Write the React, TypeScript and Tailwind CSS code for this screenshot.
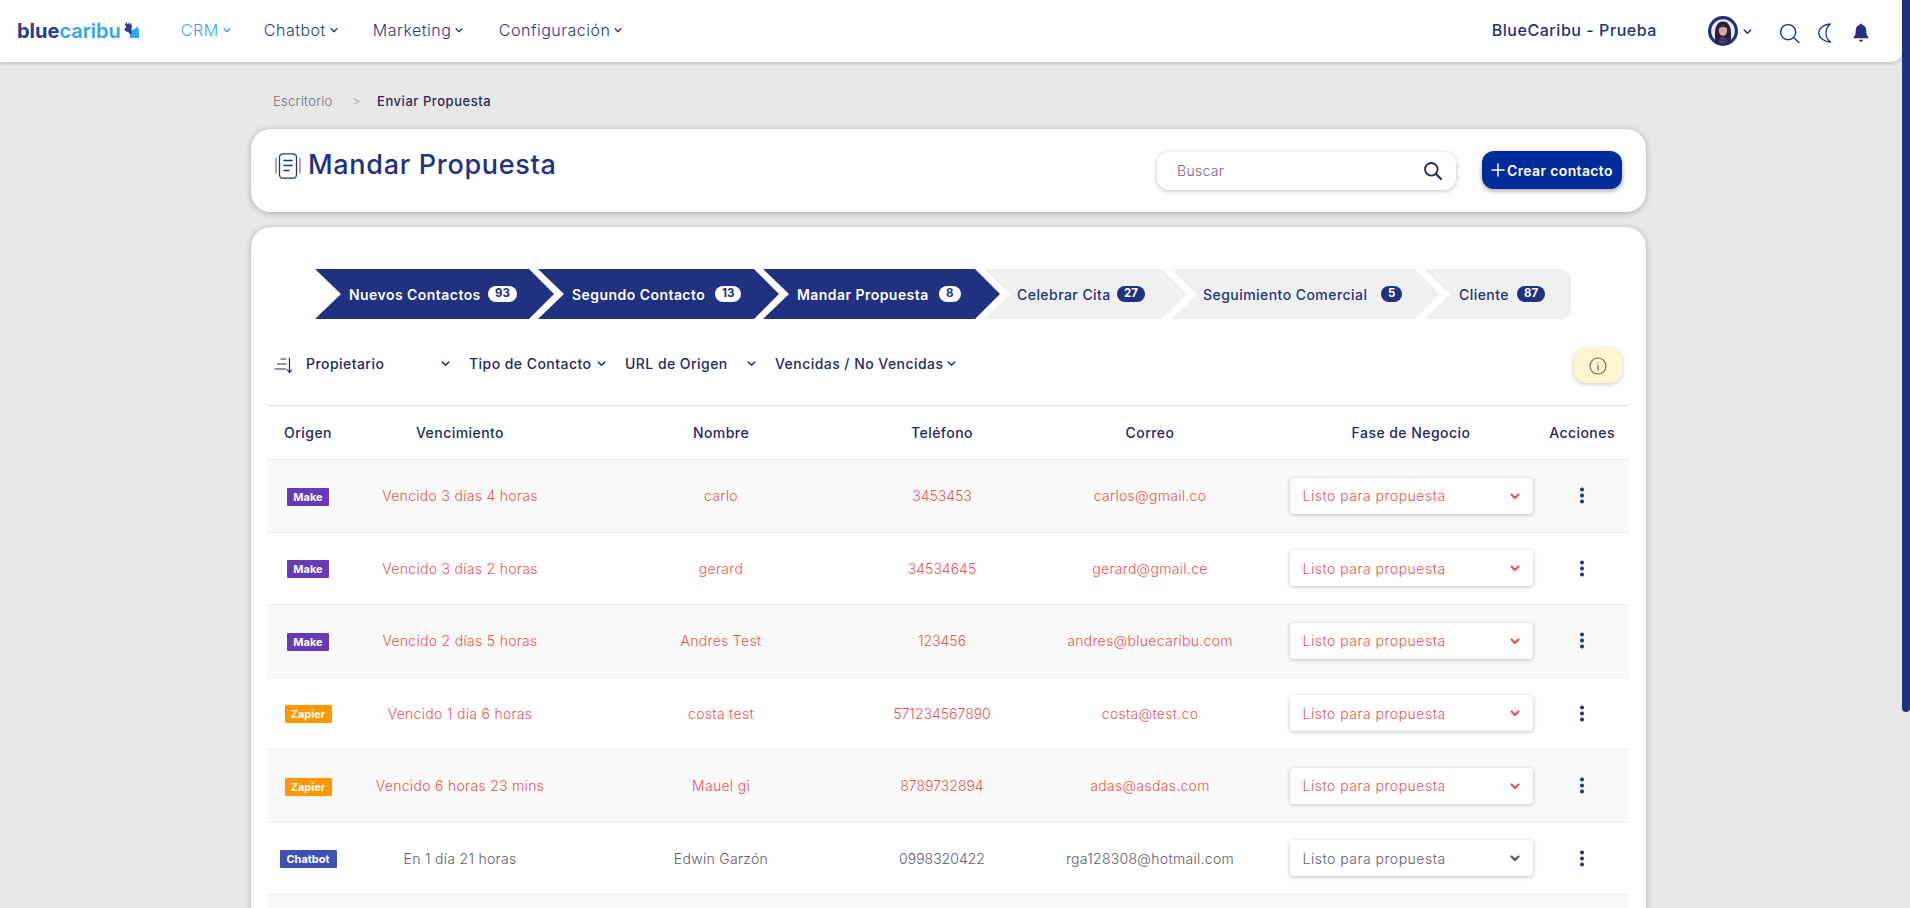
import React from "react";

const navy = "#1f317f";

function Chevron({ className = "", sw = "1.6" }: { className?: string; sw?: string }) {
  return (
    <svg viewBox="0 0 12 12" className={className} fill="none" stroke="currentColor" strokeWidth={sw} strokeLinecap="round" strokeLinejoin="round">
      <path d="M2.500 4.500 6 8l3.500-3.500" />
    </svg>
  );
}

function Logo() {
  return (
    <div className="flex items-center">
      <span className="text-[20px] leading-none font-bold text-[#2b3a8c]">blue</span>
      <span className="text-[20px] leading-none font-semibold text-[#2fa6ee]">caribu</span>
      <svg viewBox="0 0 16 18" className="ml-[3px] -mt-[2px] w-[15px] h-[17px]">
        <path d="M6 9.500 9 8.500 12 7 14 4.500 16 8.500 16 17 6.500 17Z" fill="#2fa6ee" />
        <path d="M2.500 0 4 2.500 5 0.500 6.500 3 7 0.500 8.500 4 7.800 9 8.500 12 6.500 13 4.500 10.500 2 10 0 7.500 2.500 5.500 1 3Z" fill="#2b3a8c" />
      </svg>
    </div>
  );
}

function NavItem({ label, active, w = "" }: { label: string; active?: boolean; w?: string }) {
  return (
    <div className={`flex items-center gap-[3px] text-[16px] tracking-[0.5px] font-light ${w} ${active ? "text-[#2fa6ee]" : "text-[#2b3a7c]"}`}>
      <span>{label}</span>
      <Chevron className="w-[10px] h-[10px]" />
    </div>
  );
}

function Avatar() {
  return (
    <svg viewBox="0 0 30 30" className="w-[30px] h-[30px]">
      <circle cx="15" cy="15" r="15" fill="#1f317f" />
      <circle cx="15" cy="15" r="11.800" fill="#ece9ec" />
      <path d="M7.500 26C6 16 7 5.500 15 5.500S24 16 22.500 26a12 12 0 0 1-15 0Z" fill="#2a1f3d" />
      <ellipse cx="15" cy="14.500" rx="4.200" ry="5.200" fill="#d9a493" />
      <path d="M10.500 12.500C11 8.500 19 8.500 19.500 12.500 17 10.500 13 10.500 10.500 12.500Z" fill="#2a1f3d" />
      <path d="M10 26.500c1-4 3-5.500 5-5.500s4 1.500 5 5.500a12 12 0 0 1-10 0Z" fill="#4b3a63" />
    </svg>
  );
}

function Step({ label, count, active, width, pl, textW, last }: { label: string; count: string; active?: boolean; width: string; pl: string; textW: string; last?: boolean }) {
  const clip = last
    ? "[clip-path:polygon(0_0,100%_0,100%_100%,0_100%,26px_50%)] rounded-r-[10px]"
    : "[clip-path:polygon(0_0,calc(100%-25px)_0,100%_50%,calc(100%-25px)_100%,0_100%,26px_50%)]";
  return (
    <div className={`h-[50px] flex items-center -mr-[16px] shrink-0 ${width} ${pl} ${clip} ${active ? "bg-[#1f317f]" : "bg-[#eff1f1]"}`}>
      <span className={`${textW} pt-[1px] text-[14px] tracking-[0.45px] whitespace-nowrap ${active ? "text-white font-semibold" : "text-[#1f317f] font-medium"}`}>{label}</span>
      <span className={`ml-[8px] h-[16px] px-[7px] rounded-full flex items-center text-[11.500px] font-bold ${active ? "bg-white text-[#1f317f]" : "bg-[#1f317f] text-white"}`}>{count}</span>
    </div>
  );
}

function Filter({ label, w }: { label: string; w: string }) {
  return (
    <div className="flex items-center text-[14px] tracking-[0.45px] font-medium text-[#1f2a60]">
      <span className={`${w} whitespace-nowrap`}>{label}</span>
      <Chevron className="w-[11px] h-[11px] text-[#1f317f]" />
    </div>
  );
}

type Row = { origin: "Make" | "Zapier" | "Chatbot"; due: string; name: string; phone: string; mail: string; late: boolean };

const rows: Row[] = [
  { origin: "Make", due: "Vencido 3 días 4 horas", name: "carlo", phone: "3453453", mail: "carlos@gmail.co", late: true },
  { origin: "Make", due: "Vencido 3 días 2 horas", name: "gerard", phone: "34534645", mail: "gerard@gmail.ce", late: true },
  { origin: "Make", due: "Vencido 2 días 5 horas", name: "Andres Test", phone: "123456", mail: "andres@bluecaribu.com", late: true },
  { origin: "Zapier", due: "Vencido 1 día 6 horas", name: "costa test", phone: "571234567890", mail: "costa@test.co", late: true },
  { origin: "Zapier", due: "Vencido 6 horas 23 mins", name: "Mauel gi", phone: "8789732894", mail: "adas@asdas.com", late: true },
  { origin: "Chatbot", due: "En 1 día 21 horas", name: "Edwin Garzón", phone: "0998320422", mail: "rga128308@hotmail.com", late: false },
];

const originClass = {
  Make: "bg-[#673ab7] w-[42px]",
  Zapier: "bg-[#ff9800] w-[47px]",
  Chatbot: "bg-[#3f51b5] w-[57px]",
};

const grid = "grid grid-cols-[82px_222px_300px_142px_274px_248px_94px] items-center text-center";

export default function App() {
  return (
    <div className="flex h-[908px] overflow-hidden bg-[#e8e8e8] font-[Inter,sans-serif]">
      <div className="flex-1 min-w-0">
        <header className="h-[62px] bg-white rounded-br-[10px] shadow-[0_1px_4px_rgba(0,0,0,0.22)] flex items-center pl-[17px] pr-[33px] relative">
          <Logo />
          <nav className="flex items-center ml-[42px] -mt-[2px]">
            <NavItem label="CRM" active w="w-[83px]" />
            <NavItem label="Chatbot" w="w-[109px]" />
            <NavItem label="Marketing" w="w-[126px]" />
            <NavItem label="Configuración" />
          </nav>
          <div className="ml-auto flex items-center">
            <span className="text-[16px] tracking-[0.55px] -mt-[2px] font-medium text-[#1f317f] whitespace-nowrap">BlueCaribu - Prueba</span>
            <div className="ml-[51px] flex items-center">
              <Avatar />
              <Chevron className="ml-[4px] w-[11px] h-[11px] text-[#1f317f]" />
            </div>
            <svg viewBox="0 0 20 20" className="ml-[26px] mt-[4px] w-[21px] h-[21px]" fill="none" stroke="#1f317f" strokeWidth="1.300" strokeLinecap="round">
              <circle cx="8.700" cy="8.700" r="7.200" />
              <path d="m14 14 5 4.600" />
            </svg>
            <svg viewBox="0 0 20 22" className="ml-[17px] mt-[4px] w-[18px] h-[20px]" fill="none" stroke="#1f317f" strokeWidth="1.400" strokeLinejoin="round">
              <path d="M15 1C8 1 2 5.500 2 11s6 10 13 10c-3.500-2.500-5-6-5-10s1.500-7.500 5-10Z" />
            </svg>
            <svg viewBox="0 0 16 20" className="ml-[18px] mt-[4px] w-[16px] h-[20px]" fill="#1f317f">
              <path d="M8 0.500a1.500 1.500 0 0 1 1.400 1.600C12 2.800 13.300 5 13.300 8c0 3.400.7 5 2.200 6.300v1H.5v-1C2 13 2.700 11.400 2.700 8c0-3 1.300-5.200 3.900-5.900A1.500 1.500 0 0 1 8 .5Z" />
              <path d="M6 16.700h4a2 2 0 0 1-4 0Z" />
            </svg>
          </div>
        </header>

        <main className="ml-[251px] w-[1395px]">
          <div className="ml-[22px] h-[67px] flex items-center text-[13px] pt-[13px]">
            <span className="font-light tracking-[0.3px] text-[#6e6b7b] w-[79px]">Escritorio</span>
            <span className="font-light text-[#a7a4b0] w-[25px]">&gt;</span>
            <span className="font-medium tracking-[0.55px] text-[#2b2a55]">Enviar Propuesta</span>
          </div>

          <section className="h-[83px] bg-white rounded-[20px] shadow-[0_1px_6px_rgba(0,0,0,0.28)] flex items-start pl-[24px] pr-[24px]">
            <div className="flex items-center mt-[24px]">
              <svg viewBox="0 0 26 26" className="w-[26px] h-[26px]" fill="none" stroke={navy} strokeWidth="1.300" strokeLinecap="round">
                <rect x="4.500" y="0.800" width="17" height="24.400" rx="3.500" />
                <path d="M1 5v15M25 5v15" strokeWidth="1" stroke="#5a4f7f" />
                <path d="M9 7.500h8M9 12.500h8M9 17.500h5" strokeWidth="1.500" />
              </svg>
              <h1 className="ml-[7px] -mt-[2px] text-[27px] tracking-[0.7px] leading-[28px] font-medium text-[#1f317f]">Mandar Propuesta</h1>
            </div>
            <div className="ml-auto mt-[23px] w-[299px] h-[38px] rounded-[12px] bg-white shadow-[0_1px_5px_rgba(0,0,0,0.25)] flex items-center pl-[20px] pr-[13px]">
              <span className="text-[14px] tracking-[0.3px] -mt-[1px] font-light text-[#6e6b7b]">Buscar</span>
              <svg viewBox="0 0 20 20" className="ml-auto w-[20px] h-[20px]" fill="none" stroke="#1f2a60" strokeWidth="1.800" strokeLinecap="round">
                <circle cx="8.300" cy="8.300" r="6.300" />
                <path d="m13 13 5 5" strokeWidth="2.200" />
              </svg>
            </div>
            <button className="ml-[26px] mt-[22px] w-[140px] h-[38px] rounded-[12px] bg-[#002b9a] text-white shadow-[0_2px_5px_rgba(0,0,0,0.35)] flex items-center justify-center text-[14px] tracking-[0.35px] font-semibold">
              <svg viewBox="0 0 14 14" className="w-[14px] h-[14px] mr-[2px]" fill="none" stroke="white" strokeWidth="1.500">
                <path d="M7 0.500v13M0.500 7h13" />
              </svg>
              Crear contacto
            </button>
          </section>

          <section className="mt-[15px] bg-white rounded-t-[20px] shadow-[0_1px_6px_rgba(0,0,0,0.28)] pl-[16px] pr-[17px] pt-[42px] h-[700px]">
            <div className="flex pl-[48px]">
              <Step label="Nuevos Contactos" count="93" active width="w-[239px]" pl="pl-[34px]" textW="w-[131px]" />
              <Step label="Segundo Contacto" count="13" active width="w-[241px]" pl="pl-[34px]" textW="w-[135px]" />
              <Step label="Mandar Propuesta" count="8" active width="w-[237px]" pl="pl-[34px]" textW="w-[134px]" />
              <Step label="Celebrar Cita" count="27" width="w-[203px]" pl="pl-[33px]" textW="w-[92px]" />
              <Step label="Seguimiento Comercial" count="5" width="w-[269px]" pl="pl-[32px]" textW="w-[170px]" />
              <Step label="Cliente" count="87" width="w-[147px]" pl="pl-[35px]" textW="w-[50px]" last />
            </div>

            <div className="mt-[29px] h-[35px] pl-[7px] pr-[7px] flex items-center">
              <svg viewBox="0 0 18 18" className="w-[18px] h-[18px] -mt-[2px]" fill="none" stroke="#2b2a55" strokeWidth="1.200" strokeLinecap="round">
                <path d="M7 3h5M3.500 8H12M1 13h11" />
                <path d="M15.500 2v14M13.500 14l2 2.500 2-2.500" />
              </svg>
              <div className="ml-[14px] -mt-[4px] flex items-center">
                <Filter label="Propietario" w="w-[134px]" />
                <div className="w-[18px]" />
                <Filter label="Tipo de Contacto" w="w-[127px]" />
                <div className="w-[18px]" />
                <Filter label="URL de Origen" w="w-[121px]" />
                <div className="w-[18px]" />
                <Filter label="Vencidas / No Vencidas" w="w-[171px]" />
              </div>
              <div className="ml-auto w-[48px] h-[35px] rounded-[12px] bg-[#fff6cf] shadow-[0_1px_5px_rgba(0,0,0,0.22)] flex items-center justify-center">
                <svg viewBox="0 0 18 18" className="w-[18px] h-[18px]" fill="none" stroke="#7a5a55" strokeWidth="1.100" strokeLinecap="round">
                  <circle cx="9" cy="9" r="8" />
                  <path d="M9 8v5M9 5.200v.1" />
                </svg>
              </div>
            </div>

            <div className="mt-[22px] border-t border-[#dddddd]">
              <div className={`${grid} h-[54px] border-b border-[#ececec] text-[14px] tracking-[0.45px] font-medium text-[#1f2a60]`}>
                <span>Origen</span>
                <span>Vencimiento</span>
                <span>Nombre</span>
                <span>Teléfono</span>
                <span>Correo</span>
                <span>Fase de Negocio</span>
                <span>Acciones</span>
              </div>
              {rows.map((r, i) => (
                <div key={r.name} className={`${grid} h-[72.5px] border-b border-[#ececec] text-[14px] font-light ${i % 2 === 0 ? "bg-[#f9f9f9]" : "bg-white"} ${r.late ? "text-[#ea5455]" : "text-[#5e5b6b]"}`}>
                  <div className="flex justify-center pt-[2px]">
                    <span className={`${originClass[r.origin]} h-[18px] rounded-[1px] flex items-center justify-center text-[11px] font-bold text-white`}>{r.origin}</span>
                  </div>
                  <span className="tracking-[0.3px]">{r.due}</span>
                  <span className="tracking-[0.3px]">{r.name}</span>
                  <span>{r.phone}</span>
                  <span className="tracking-[0.3px]">{r.mail}</span>
                  <div className="flex justify-center">
                    <div className="w-[243px] h-[36px] bg-white rounded-[4px] shadow-[0_1px_4px_rgba(0,0,0,0.25)] flex items-center pl-[13px] pr-[12px]">
                      <span className="tracking-[0.5px]">Listo para propuesta</span>
                      <Chevron sw="2.200" className={`ml-auto w-[12px] h-[12px] ${r.late ? "text-[#ea5455]" : "text-[#5e4b73]"}`} />
                    </div>
                  </div>
                  <div className="flex justify-center">
                    <svg viewBox="0 0 6 17" className="w-[6px] h-[17px]" fill="#1f317f">
                      <circle cx="3" cy="2.500" r="2" />
                      <circle cx="3" cy="8.500" r="2" />
                      <circle cx="3" cy="14.500" r="2" />
                    </svg>
                  </div>
                </div>
              ))}
              <div className="h-[40px] bg-[#f9f9f9]" />
            </div>
          </section>
        </main>
      </div>
      <div className="w-[8px] shrink-0">
        <div className="h-[712px] bg-[#1f317f] rounded-b-[4px]" />
      </div>
    </div>
  );
}
